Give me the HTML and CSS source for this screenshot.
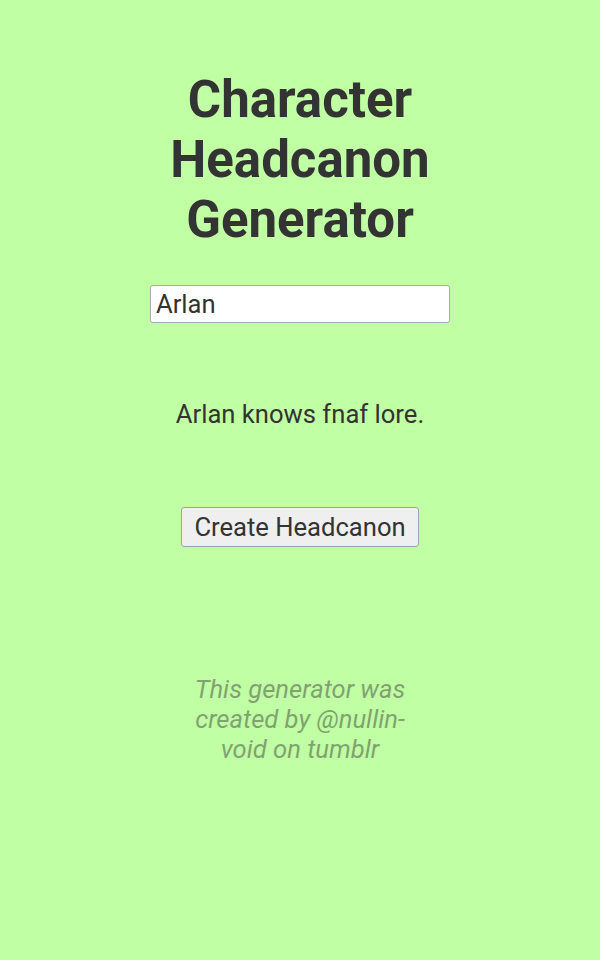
FILE: index.html
```html
<!DOCTYPE html>
<html>
<head>
<meta charset="utf-8">
<link rel="stylesheet" href="styles.css">
</head>
<body>
<main class="wrap">
  <h1 class="title">Character Headcanon Generator</h1>
  <input class="name" type="text" value="Arlan">
  <p class="output">Arlan knows fnaf lore.</p>
  <button class="btn">Create Headcanon</button>
  <p class="credit">This generator was created by @nullin-void on tumblr</p>
</main>
</body>
</html>
```
FILE: styles.css
```css
html, body {
  margin: 0;
  padding: 0;
  background: #c0ffa3;
}
body {
  font-family: Roboto, "Liberation Sans", sans-serif;
  color: #333;
  min-height: 960px;
}
.wrap {
  width: 300px;
  margin: 0 auto;
  padding-top: 70px;
  display: flex;
  flex-direction: column;
  align-items: center;
  text-align: center;
}
.title {
  font-size: 51px;
  font-weight: 700;
  line-height: 60px;
  margin: 0;
}
.name {
  margin-top: 35px;
  width: 300px;
  height: 38px;
  box-sizing: border-box;
  font-family: Roboto, "Liberation Sans", sans-serif;
  font-size: 25.6px;
  color: #333;
  padding: 0 5px;
  border: 1px solid #a9a9a9;
  border-radius: 3px;
  background: #fff;
}
.output {
  margin: 76px 0 0;
  font-size: 25.6px;
  line-height: 30px;
}
.btn {
  margin-top: 78px;
  font-family: Roboto, "Liberation Sans", sans-serif;
  font-size: 25.6px;
  color: #333;
  background: #efefef;
  border: 1px solid #a0a0a0;
  border-radius: 3px;
  padding: 4px 12px;
}
.credit {
  width: 232px;
  margin: 127px 0 0;
  font-size: 25.6px;
  line-height: 30px;
  font-style: italic;
  color: #333;
  opacity: 0.45;
}
```
